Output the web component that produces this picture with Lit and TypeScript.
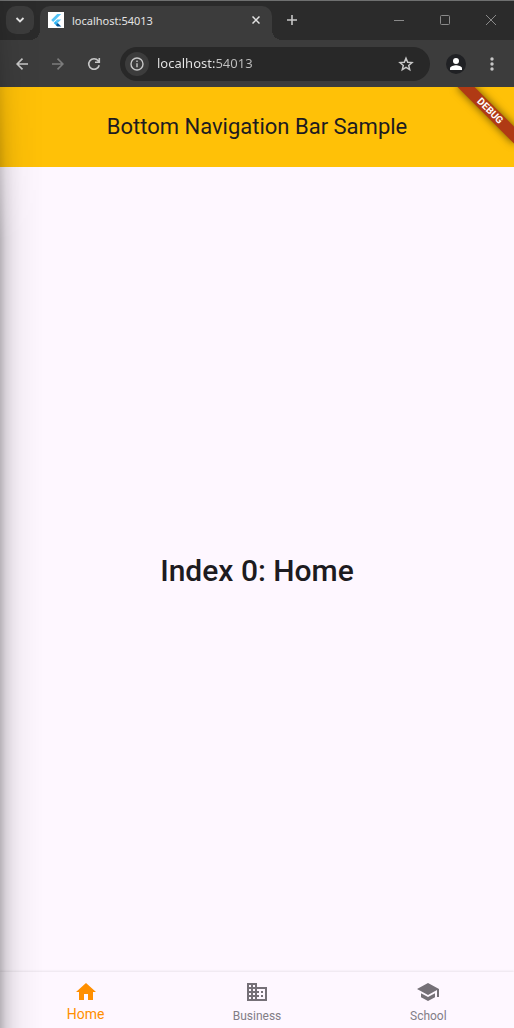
import { LitElement, html, css, svg } from "lit";
import { customElement, state } from "lit/decorators.js";
import { classMap } from "lit/directives/class-map.js";

const destinations = [
  { label: "Home", icon: svg`<path d="M10 20v-6h4v6h5v-8h3L12 3 2 12h3v8z"/>` },
  {
    label: "Business",
    icon: svg`<path d="M12 7V3H2v18h20V7H12zM6 19H4v-2h2v2zm0-4H4v-2h2v2zm0-4H4V9h2v2zm0-4H4V5h2v2zm4 12H8v-2h2v2zm0-4H8v-2h2v2zm0-4H8V9h2v2zm0-4H8V5h2v2zm10 12h-8v-2h2v-2h-2v-2h2v-2h-2V9h8v10zm-2-8h-2v2h2v-2zm0 4h-2v2h2v-2z"/>`,
  },
  {
    label: "School",
    icon: svg`<path d="M5 13.180v4L12 21l7-3.820v-4L12 17l-7-3.820zM12 3 1 9l11 6 9-4.910V17h2V9L12 3z"/>`,
  },
];

@customElement("browser-chrome")
export class BrowserChrome extends LitElement {
  static styles = css`
    :host {
      display: block;
      background: #3c3c3c;
      color: #e3e3e3;
      font-family: "Noto Sans", "Open Sans", sans-serif;
      font-size: 11px;
    }
    button {
      display: grid;
      place-items: center;
      flex: none;
      padding: 0;
      border: 0;
      background: none;
      color: #c7c7c7;
    }
    svg {
      display: block;
      fill: none;
      stroke: currentColor;
    }
    .strip {
      display: flex;
      box-sizing: border-box;
      height: 40px;
      border-top: 1px solid #6f7070;
      background: #2b2b2b;
    }
    .search {
      width: 28px;
      height: 28px;
      margin: 5px 6px 0;
      border-radius: 10px;
      background: #3c3c3c;
      color: #e3e3e3;
    }
    .tab {
      position: relative;
      display: flex;
      align-items: center;
      box-sizing: border-box;
      width: 232px;
      height: 34px;
      margin-top: 5px;
      padding: 0 8px 6px;
      border-radius: 10px 10px 0 0;
      background: #3c3c3c;
    }
    .tab::before,
    .tab::after {
      content: "";
      position: absolute;
      bottom: 0;
      width: 10px;
      height: 10px;
    }
    .tab::before {
      right: 100%;
      background: radial-gradient(circle at 0 0, #2b2b2b 10px, #3c3c3c 10px);
    }
    .tab::after {
      left: 100%;
      background: radial-gradient(circle at 100% 0, #2b2b2b 10px, #3c3c3c 10px);
    }
    .favicon {
      flex: none;
      background: #fff;
      stroke: none;
    }
    .title {
      flex: 1;
      margin-left: 8px;
    }
    .close {
      width: 16px;
      height: 16px;
      color: #e3e3e3;
    }
    .add {
      width: 28px;
      height: 28px;
      margin: 5px 0 0 6px;
    }
    .window {
      display: flex;
      margin-left: auto;
    }
    .window button {
      width: 46px;
      height: 38px;
      color: #8a8a8a;
    }
    .toolbar {
      display: flex;
      align-items: center;
      box-sizing: border-box;
      height: 47px;
      padding: 0 4px;
    }
    .tool {
      width: 36px;
      height: 34px;
    }
    .dim {
      color: #7c7c7c;
    }
    .address {
      display: flex;
      align-items: center;
      flex: 1;
      min-width: 0;
      box-sizing: border-box;
      height: 34px;
      margin: 0 8px;
      padding: 0 5px;
      border-radius: 17px;
      background: #282828;
    }
    .info {
      width: 24px;
      height: 24px;
      border-radius: 12px;
      background: #3c3c3c;
    }
    .url {
      flex: 1;
      min-width: 0;
      height: 20px;
      margin: 0 0 2px 8px;
      padding: 0;
      border: 0;
      outline: 0;
      background: linear-gradient(90deg, #e8e8e8 58px, #c0c0c0 58px);
      background-clip: text;
      -webkit-background-clip: text;
      color: transparent;
      font: 13px/20px "Noto Sans", "Open Sans", sans-serif;
    }
    .star {
      width: 38px;
      height: 34px;
    }
    .avatar {
      fill: #fff;
      stroke: none;
    }
    .dots {
      fill: currentColor;
      stroke: none;
    }
  `;

  render() {
    return html`
      <div class="strip">
        <button class="search" aria-label="Search tabs">
          <svg width="10" height="8" stroke-width="1.8"><path d="M1.500 2L5 5.500 8.500 2" /></svg>
        </button>
        <div class="tab">
          <svg class="favicon" width="16" height="16">
            <path d="M9.200 2h4L5.200 10 3.200 8z" fill="#54c5f8" />
            <path d="M9.200 7.500h4L9.600 11l-2-2z" fill="#54c5f8" />
            <path d="M5.700 11l2-2 2 2-2 2z" fill="#29b6f6" />
            <path d="M7.700 13l2-2 3.600 3.500H9.200z" fill="#01579b" />
          </svg>
          <span class="title">localhost:54013</span>
          <button class="close" aria-label="Close tab">
            <svg width="8" height="8" stroke-width="1.5"><path d="M.5.5l7 7M7.500.5l-7 7" /></svg>
          </button>
        </div>
        <button class="add" aria-label="New tab">
          <svg width="10" height="10" stroke-width="1.6"><path d="M5 0v10M0 5h10" /></svg>
        </button>
        <div class="window">
          <button aria-label="Minimize">
            <svg width="10" height="10"><path d="M0 5.500h10" /></svg>
          </button>
          <button aria-label="Maximize">
            <svg width="10" height="10"><rect x=".5" y=".5" width="9" height="9" rx="1" /></svg>
          </button>
          <button aria-label="Close window">
            <svg width="10" height="10"><path d="M0 0l10 10M10 0L0 10" /></svg>
          </button>
        </div>
      </div>
      <div class="toolbar">
        <button class="tool" aria-label="Back">
          <svg width="12" height="12" stroke-width="1.6"><path d="M12 6H1M6.500.6L1.100 6l5.400 5.400" /></svg>
        </button>
        <button class="tool dim" aria-label="Forward">
          <svg width="12" height="12" stroke-width="1.6"><path d="M0 6h11M5.500.6L10.900 6l-5.400 5.400" /></svg>
        </button>
        <button class="tool" aria-label="Reload">
          <svg width="14" height="14" stroke-width="1.6">
            <path d="M12.200 8.200A5.300 5.300 0 1 1 11.200 3.700L12 4.600M12.300 1v4.300H8" />
          </svg>
        </button>
        <div class="address">
          <button class="info" aria-label="View site information">
            <svg width="14" height="14" stroke-width="1.4">
              <circle cx="7" cy="7" r="6" /><path d="M7 6.200v4M7 3.600v1.500" />
            </svg>
          </button>
          <input class="url" aria-label="Address" .value=${"localhost:54013"} />
          <button class="star" aria-label="Bookmark this page">
            <svg width="16" height="16" stroke-width="1.5">
              <path d="M8 2.200l1.700 4 4.300.4-3.300 2.800 1 4.200L8 11.400l-3.700 2.200 1-4.200L2 6.600l4.300-.4z" />
            </svg>
          </button>
        </div>
        <button class="tool" aria-label="Profile">
          <svg class="avatar" width="20" height="20">
            <circle cx="10" cy="10" r="10" fill="#202124" />
            <circle cx="10" cy="7" r="3" />
            <path d="M4 16v-1.800C4 12.200 8 11.200 10 11.200s6 1 6 3V16z" />
          </svg>
        </button>
        <button class="tool" aria-label="Browser menu">
          <svg class="dots" width="4" height="14">
            <circle cx="2" cy="2" r="1.700" /><circle cx="2" cy="7" r="1.700" /><circle cx="2" cy="12" r="1.700" />
          </svg>
        </button>
      </div>
    `;
  }
}

@customElement("app-root")
export class AppRoot extends LitElement {
  @state() private selected = 0;

  static styles = css`
    :host {
      position: relative;
      display: flex;
      flex-direction: column;
      min-height: 100vh;
      overflow: hidden;
      background: #fef7ff;
      color: #1d1b20;
      font-family: Roboto, sans-serif;
    }
    .shade {
      position: absolute;
      inset: 0 auto 0 0;
      width: 44px;
      background: linear-gradient(
        90deg,
        rgba(0, 0, 0, 0.28),
        rgba(0, 0, 0, 0.15) 6px,
        rgba(0, 0, 0, 0.08) 13px,
        rgba(0, 0, 0, 0.03) 22px,
        rgba(0, 0, 0, 0.01) 34px,
        transparent
      );
      -webkit-mask-image: linear-gradient(rgba(0, 0, 0, 0.2), #000 240px);
      mask-image: linear-gradient(rgba(0, 0, 0, 0.2), #000 240px);
      pointer-events: none;
    }
    .appbar {
      position: relative;
      display: grid;
      place-items: center;
      height: 80px;
      overflow: hidden;
      background: #ffc107;
    }
    .heading {
      margin: 0;
      font-size: 22px;
      font-weight: 400;
      line-height: 28px;
    }
    .banner {
      position: absolute;
      top: 18px;
      right: -16px;
      width: 80px;
      height: 12px;
      transform: rotate(45deg);
      background: #b03a14;
      box-shadow: 0 0 8px rgba(0, 0, 0, 0.6);
      color: #fff;
      font-size: 10px;
      font-weight: 700;
      line-height: 12px;
      text-align: center;
    }
    .body {
      display: grid;
      flex: 1;
      place-items: center;
      padding-top: 2px;
      font-size: 30px;
      font-weight: 500;
      line-height: 40px;
    }
    .message {
      margin: 0;
    }
    .nav {
      display: flex;
      height: 56px;
      box-shadow: 0 -1px 2px rgba(0, 0, 0, 0.08);
    }
    .item {
      display: flex;
      flex: 1;
      flex-direction: column;
      align-items: center;
      justify-content: flex-start;
      gap: 4px;
      padding: 8px 0 0;
      border: 0;
      background: none;
      color: #827d86;
      font: 12px/16px Roboto, sans-serif;
    }
    .item svg {
      fill: #757077;
    }
    .selected {
      gap: 2px;
      color: #ff8f00;
      font-size: 14px;
    }
    .selected svg {
      fill: #ff8f00;
    }
  `;

  render() {
    return html`
      <browser-chrome></browser-chrome>
      <header class="appbar">
        <h1 class="heading">Bottom Navigation Bar Sample</h1>
        <span class="banner">DEBUG</span>
      </header>
      <main class="body">
        <p class="message">Index ${this.selected}: ${destinations[this.selected].label}</p>
      </main>
      <nav class="nav">
        ${destinations.map(
          (d, i) => html`
            <button
              class=${classMap({ item: true, selected: i === this.selected })}
              @click=${() => (this.selected = i)}
            >
              <svg width="24" height="24" viewBox="0 0 24 24">${d.icon}</svg>
              <span>${d.label}</span>
            </button>
          `
        )}
      </nav>
      <div class="shade"></div>
    `;
  }
}
